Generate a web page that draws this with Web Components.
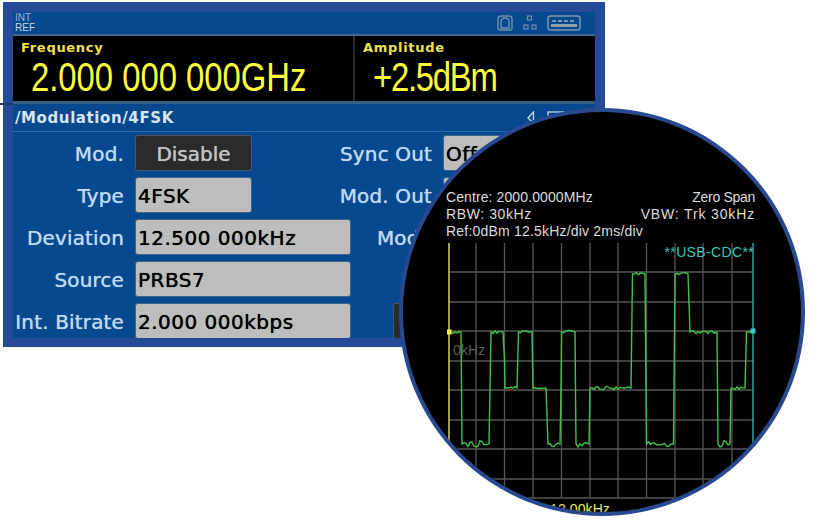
<!DOCTYPE html>
<html>
<head>
<meta charset="utf-8">
<style>
  html, body { margin: 0; background: #fff; }
  body { width: 820px; height: 530px; overflow: hidden; position: relative; }
</style>
</head>
<body>
<sg-panel>
  <sg-status></sg-status>
  <sg-readouts>
    <sg-readout label="Frequency" value="2.000 000 000GHz" style="width: 342px"></sg-readout>
    <sg-readout label="Amplitude" value="+2.5dBm" tight></sg-readout>
  </sg-readouts>
  <sg-path>/Modulation/4FSK</sg-path>
  <sg-form>
    <sg-label>Mod.</sg-label><sg-btn>Disable</sg-btn><sg-label span2>Sync Out</sg-label><sg-box>Off</sg-box>
    <sg-label>Type</sg-label><sg-box>4FSK</sg-box><sg-label span2>Mod. Out</sg-label><sg-box></sg-box>
    <sg-label>Deviation</sg-label><sg-box wide>12.500 000kHz</sg-box><sg-label>Mode</sg-label><sg-box></sg-box>
    <sg-label>Source</sg-label><sg-box wide>PRBS7</sg-box><sg-label></sg-label><sg-box></sg-box>
    <sg-label>Int. Bitrate</sg-label><sg-box wide>2.000 000kbps</sg-box><sg-btn tail></sg-btn>
  </sg-form>
</sg-panel>
<sg-tick></sg-tick>
<sg-scope></sg-scope>

<script>
function def(name, css, html) {
  customElements.define(name, class extends HTMLElement {
    constructor() {
      super();
      this.attachShadow({ mode: 'open' }).innerHTML = `<style>${css}</style>${html}`;
    }
  });
}

def('sg-panel', `
  :host { display: block; width: 582px; height: 326px; margin: 2px 0 0 3px; padding: 10px 10px 9px;
    background: #244a98; overflow: hidden; }
  .inner { height: 326px; background: #07498f; overflow: hidden; }
`, `<div class="inner"><slot></slot></div>`);

def('sg-status', `
  :host { display: flex; align-items: center; justify-content: space-between; height: 22px;
    border-bottom: 2px solid #3c6a8e; padding: 0 14px 0 2px;
    font: 10px/10px "Liberation Sans", sans-serif; color: #c4d8ea; }
  .ref { overflow: hidden; height: 20px; }
  .ref div:first-child { opacity: .75; }
  .icons { display: flex; align-items: center; gap: 10px; }
`, `
  <div class="ref"><div>INT</div><div>REF</div></div>
  <div class="icons">
    <svg width="16" height="16" viewBox="0 0 16 16" fill="none" stroke="#6f90aa" stroke-width="1.4">
      <path d="M4 1h8q3 0 3 3v9q0 2-2 2H3q-2 0-2-2V4q0-3 3-3z"/><path d="M4 13V7q0-4 4-4t4 4v6z"/>
    </svg>
    <svg width="14" height="16" viewBox="0 0 14 16" fill="none" stroke="#6f90aa" stroke-width="1.2">
      <rect x="4.5" y="1" width="4" height="4"/><rect x="1" y="10" width="4" height="4"/><rect x="9" y="10" width="4" height="4"/>
    </svg>
    <svg width="34" height="16" viewBox="0 0 34 16" fill="none" stroke="#7f97ab" stroke-width="1.5">
      <rect x="1" y="1" width="32" height="14" rx="2.5"/>
      <path d="M5 6h24" stroke-dasharray="4 2" stroke="#9fb0be"/>
      <path d="M4 10.5h26" stroke-width="3" stroke="#8fa0ae"/>
    </svg>
  </div>
`);

def('sg-readouts', `
  :host { display: flex; height: 65px; background: #000; border-bottom: 3px solid #35607f; }
`, `<slot></slot>`);

customElements.define('sg-readout', class extends HTMLElement {
  constructor() {
    super();
    this.attachShadow({ mode: 'open' });
  }
  connectedCallback() {
    const tight = this.hasAttribute('tight');
    this.shadowRoot.innerHTML = `
    <style>
      :host { display: block; box-sizing: border-box; padding: 4px 0 0 8px; overflow: hidden; }
      :host(:first-child) { border-right: 2px solid #2b2b2b; }
      .label { font: bold 13px/15px "DejaVu Sans", sans-serif; letter-spacing: .7px; color: #f0e24c; }
      .value { font: 40px/42px "Liberation Sans", sans-serif; color: #ffff3c; white-space: pre;
        transform: scaleX(.82); transform-origin: 0 0; margin: 1px 0 0 10px;
        letter-spacing: ${tight ? '-1.5px' : '0'}; }
    </style>
    <div class="label">${this.getAttribute('label')}</div>
    <div class="value">${this.getAttribute('value')}</div>`;
  }
});

def('sg-path', `
  :host { display: flex; align-items: center; justify-content: space-between; height: 27px;
    border-bottom: 1px solid #2c6aa2; padding: 0 30px 0 2px;
    font: bold 15px "DejaVu Sans", sans-serif; letter-spacing: .6px; color: #d8e4ee; }
  .icons { display: flex; align-items: center; gap: 12px; }
`, `
  <slot></slot>
  <div class="icons">
    <svg width="8" height="13" viewBox="0 0 8 13" fill="none" stroke="#c6d6e2" stroke-width="1.3"><path d="M6.5 1L1 7l5.5 5z"/></svg>
    <svg width="18" height="13" viewBox="0 0 18 13" fill="none" stroke="#c6d6e2" stroke-width="1.3"><rect x="1" y="1" width="16" height="11"/></svg>
  </div>
`);

def('sg-form', `
  :host { display: grid; grid-template-columns: 122px 117px 99px 92px 1fr; grid-auto-rows: 36px;
    row-gap: 6px; padding-top: 3px; font: 20px "DejaVu Sans", sans-serif; }
`, `<slot></slot>`);

def('sg-label', `
  :host { display: flex; align-items: center; justify-content: flex-end; padding: 1px 11px 0 0; box-sizing: border-box;
    color: #bcd9ef; letter-spacing: .15px; white-space: nowrap; text-shadow: 0 0 .7px #bcd9ef; }
  :host([span2]) { grid-column: span 2; }
`, `<slot></slot>`);

def('sg-box', `
  :host { display: flex; align-items: center; box-sizing: border-box; padding: 1px 0 0 2px; height: 36px;
    background: #bdbdbd; border: 1px solid #3b6787; border-radius: 3px;
    color: #000; font-size: 20px; letter-spacing: .5px; white-space: nowrap; overflow: hidden;
    text-shadow: 0 0 .7px #000; }
  :host([wide]) { grid-column: span 2; }
`, `<slot></slot>`);

def('sg-btn', `
  :host { display: flex; align-items: center; justify-content: center; box-sizing: border-box; height: 36px; padding-top: 1px;
    background: #2a2a2a; border: 1px solid #3d5c74; border-top-color: #555; border-radius: 3px;
    color: #c4c4c4; text-shadow: 0 0 .7px #c4c4c4; }
  :host([tail]) { grid-column: span 2; margin-left: 42px; }
`, `<slot></slot>`);

def('sg-tick', `
  :host { display: block; position: absolute; left: 0; top: 103px; width: 13px; height: 2px; background: #1f3a66; }
`, ``);

// trace corners, page coordinates
const HI = 274, UP = 332, MID = 388, LO = 444;
const TRACE = [
  [449, UP], [461, UP], [462, LO], [489, LO], [490, MID], [491, UP], [503, UP], [504.5, 360], [505, MID],
  [517, MID], [518.5, UP], [532, UP], [533, MID], [546, MID], [547, 416], [548, LO], [560, LO], [561, MID],
  [561.6, UP], [575, UP], [576, LO], [589, LO], [590, MID], [631, MID], [632.5, HI], [645, HI], [646.5, LO],
  [673.5, LO], [675, HI], [688, HI], [690, UP], [717, UP], [718, LO], [730, LO], [731, MID], [745, MID],
  [746.5, UP], [753, UP]
];

function tracePoints() {
  const pts = [];
  let seed = 7;
  TRACE.forEach(([x, y], i) => {
    pts.push(`${x},${y}`);
    const next = TRACE[i + 1];
    if (!next || next[1] !== y) return;
    for (let nx = x + 2; nx < next[0] - 1; nx += 2) {
      seed = (seed * 31 + 11) % 97;
      const amp = y === LO ? 3 : 1.6;
      pts.push(`${nx},${(y + (seed / 97 - 0.5) * amp * 2).toFixed(1)}`);
    }
  });
  return pts.join(' ');
}

function gridLines() {
  let out = '';
  [476, 504.5, 533, 561.5, 590, 618, 646.5, 675, 703, 732].forEach(x => {
    out += `<path d="M${x} 243V498"/>`;
  });
  [272, 302, 331, 361, 390, 420, 449, 479, 498].forEach(y => {
    out += `<path d="M449 ${y}H753"/>`;
  });
  return out;
}

def('sg-scope', `
  :host { display: block; position: absolute; left: 399px; top: 108px; width: 398px; height: 400px;
    padding: 0; border: 4px solid #28498f; border-radius: 50%; background: #000; overflow: hidden;
    font: 14px/17px "Liberation Sans", sans-serif; letter-spacing: .1px; color: #dcdcdc; }
  .info { padding: 77px 46px 0 43px; height: 54px; }
  .row { display: flex; justify-content: space-between; white-space: pre; }
  .w1 { letter-spacing: .6px; }
  .w2 { letter-spacing: .85px; }
  .w3 { letter-spacing: -.3px; }
  .w4 { letter-spacing: .2px; }
  .plot { position: relative; margin: 0 0 0 43px; }
  svg { display: block; }
  .usb, .zero, .span { position: absolute; white-space: pre; }
  .usb { right: 47px; top: 1px; color: #35c8b8; letter-spacing: .35px; }
  .zero { left: 7px; top: 99px; color: #5c5c5c; }
  .span { left: 104px; top: 258px; color: #e8e860; }
`, `
  <div class="info">
    <div class="row"><span>Centre: 2000.0000MHz</span><span class="w3">Zero Span</span></div>
    <div class="row"><span class="w1">RBW: 30kHz</span><span class="w2">VBW: Trk 30kHz</span></div>
    <div class="row"><span class="w4">Ref:0dBm 12.5kHz/div 2ms/div</span></div>
  </div>
  <div class="plot">
    <svg width="312" height="280" viewBox="446 243 312 280" fill="none">
      <g stroke="#565656" stroke-width="1.3">${gridLines()}</g>
      <path d="M449 243V520" stroke="#e6e65a" stroke-width="1.4"/>
      <path d="M753 243V520" stroke="#35c8c8" stroke-width="1.2"/>
      <polyline points="${tracePoints()}" stroke="#42c24c" stroke-width="1.4"/>
      <rect x="447" y="329.5" width="4.5" height="5" fill="#f0f04a"/>
      <rect x="750.5" y="328.5" width="5" height="5" fill="#35c8c8"/>
    </svg>
    <span class="usb">**USB-CDC**</span>
    <span class="zero">0kHz</span>
    <span class="span">12.00kHz</span>
  </div>
`);
</script>
</body>
</html>
